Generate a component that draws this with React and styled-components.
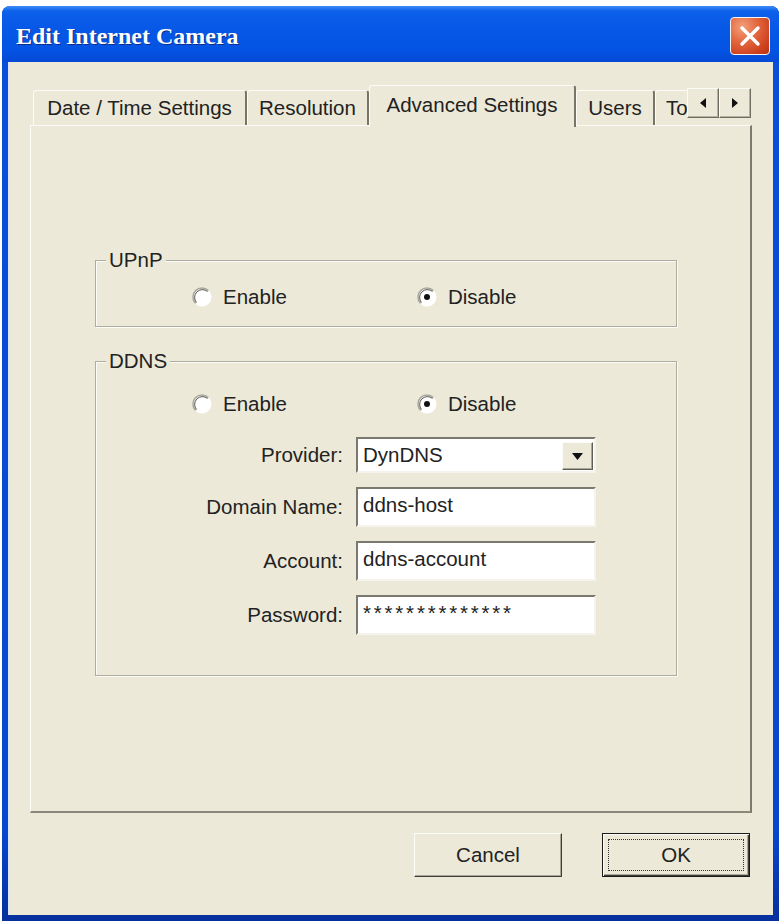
import React from "react";
import styled, { createGlobalStyle } from "styled-components";

const GlobalStyle = createGlobalStyle`
  html, body {
    margin: 0;
    padding: 0;
    background: #ffffff;
  }
  body {
    font-family: "Liberation Sans", Arial, sans-serif;
  }
`;

const Window = styled.div`
  margin: 6px 0 0 2px;
  width: 777px;
  height: 915px;
  display: flex;
  flex-direction: column;
  border-radius: 8px 8px 0 0;
  overflow: hidden;
  background: linear-gradient(180deg, #0a4fdc 0%, #0846d0 90%, #06309c 100%);
`;

const TitleBar = styled.div`
  height: 56px;
  flex: none;
  box-sizing: border-box;
  padding: 4px 9px 0 14px;
  display: flex;
  align-items: center;
  justify-content: space-between;
  background: linear-gradient(
    180deg,
    #3d8ef8 0%,
    #0d60ea 9%,
    #0758e6 40%,
    #0453e4 80%,
    #0649d4 100%
  );
`;

const Title = styled.div`
  font-family: "Liberation Serif", "Times New Roman", serif;
  font-weight: bold;
  font-size: 24px;
  color: #ffffff;
  text-shadow: 1px 1px 0 #0a2f8a;
`;

const CloseButton = styled.div`
  width: 40px;
  height: 38px;
  box-sizing: border-box;
  border: 1px solid #f4f4f4;
  border-radius: 4px;
  background: radial-gradient(
    circle at 30% 25%,
    #f3a07c 0%,
    #e2683f 40%,
    #cf4220 75%,
    #b8320f 100%
  );
  display: flex;
  align-items: center;
  justify-content: center;
`;

const Body = styled.div`
  flex: 1;
  margin: 0 6px 6px 6px;
  background: #ece9d8;
  box-sizing: border-box;
  padding: 23px 21px 0 22px;
  box-shadow: inset 2px 0 0 #d9e6fb;
  color: #222222;
  font-size: 20.5px;
`;

const TabRow = styled.div`
  height: 42px;
  margin-bottom: -2px;
  display: flex;
  align-items: flex-end;
  position: relative;
  z-index: 1;
`;

const TabList = styled.div`
  width: 657px;
  height: 42px;
  padding-left: 3px;
  box-sizing: border-box;
  display: flex;
  align-items: flex-end;
  overflow: hidden;
`;

const Tab = styled.div`
  flex: none;
  width: ${(p) => p.$w}px;
  height: ${(p) => (p.$active ? 42 : 35)}px;
  margin-bottom: ${(p) => (p.$active ? 0 : 2)}px;
  box-sizing: border-box;
  display: flex;
  align-items: ${(p) => (p.$active ? "flex-start" : "center")};
  padding-top: ${(p) => (p.$active ? 7 : 0)}px;
  padding-left: ${(p) => (p.$start ? 10 : 0)}px;
  justify-content: ${(p) => (p.$start ? "flex-start" : "center")};
  white-space: nowrap;
  background: #ece9d8;
  border-top: 1px solid #fbfbf7;
  border-left: 1px solid #fbfbf7;
  border-right: 2px solid #77756a;
  border-radius: 3px 3px 0 0;
`;

const ScrollArrows = styled.div`
  align-self: flex-start;
  margin-top: 3px;
  display: flex;
`;

const ArrowButton = styled.div`
  width: 32px;
  height: 30px;
  box-sizing: border-box;
  border: 1px solid;
  border-color: #fbfbf7 #6f6d62 #6f6d62 #fbfbf7;
  box-shadow: inset -1px -1px 0 #b3b1a4;
  display: flex;
  align-items: center;
  justify-content: center;
`;

const Panel = styled.div`
  width: 722px;
  height: 688px;
  box-sizing: border-box;
  border-top: 1px solid #fbfbf7;
  border-left: 1px solid #fbfbf7;
  border-right: 2px solid #7d7b70;
  border-bottom: 2px solid #8a887a;
  padding: 124px 0 0 64px;
`;

const Group = styled.fieldset`
  margin: 0 0 ${(p) => p.$gap || 0}px 0;
  width: 582px;
  box-sizing: border-box;
  border: 1px solid #aeac9f;
  box-shadow: inset 1px 1px 0 #fbfbf7, 1px 1px 0 #fbfbf7;
  padding: ${(p) => p.$pad};
  min-inline-size: 0;
`;

const Legend = styled.legend`
  margin-left: 10px;
  padding: 0 3px;
  font-size: 20.5px;
  line-height: 20px;
  background: #ece9d8;
`;

const RadioRow = styled.div`
  display: grid;
  grid-template-columns: 225px auto;
  padding-left: 96px;
`;

const RadioOption = styled.div`
  display: flex;
  align-items: center;
  gap: 11px;
  height: 22px;
`;

const Form = styled.div`
  display: grid;
  grid-template-columns: 247px 240px;
  column-gap: 13px;
  row-gap: 14px;
  align-items: center;
  margin-top: 22px;
`;

const Label = styled.div`
  text-align: right;
  white-space: nowrap;
`;

const Field = styled.div`
  height: 40px;
  box-sizing: border-box;
  background: #ffffff;
  border: 2px solid;
  border-color: #7b796e #f4f3ee #f4f3ee #7b796e;
  padding: 4px 6px 0 5px;
  line-height: 24px;
  white-space: nowrap;
  letter-spacing: ${(p) => p.$spacing || 0}px;
`;

const Select = styled.div`
  height: 36px;
  box-sizing: border-box;
  background: #ffffff;
  border: 2px solid;
  border-color: #7b796e #f4f3ee #f4f3ee #7b796e;
  padding: 0 1px 1px 5px;
  display: flex;
  align-items: center;
  justify-content: space-between;
`;

const DropButton = styled.div`
  width: 31px;
  height: 28px;
  align-self: flex-end;
  box-sizing: border-box;
  background: #ece9d8;
  border: 1px solid;
  border-color: #fbfbf7 #5f5d54 #5f5d54 #fbfbf7;
  box-shadow: inset -1px -1px 0 #a9a79a;
  display: flex;
  align-items: center;
  justify-content: center;
`;

const ButtonRow = styled.div`
  display: flex;
  justify-content: flex-end;
  gap: 40px;
  margin-top: 20px;
  padding-right: 2px;
`;

const Button = styled.div`
  width: 148px;
  height: 44px;
  box-sizing: border-box;
  display: flex;
  align-items: center;
  justify-content: center;
  background: #ece9d8;
  border: 1px solid;
  border-color: ${(p) =>
    p.$default ? "#1a1a1a" : "#fbfbf7 #3f3e38 #3f3e38 #fbfbf7"};
  box-shadow: ${(p) =>
    p.$default
      ? "inset 1px 1px 0 #fbfbf7, inset -1px -1px 0 #3f3e38, inset -2px -2px 0 #a9a79a"
      : "inset -1px -1px 0 #a9a79a"};
  outline: ${(p) => (p.$default ? "1px dotted #333" : "none")};
  outline-offset: -7px;
`;

const RadioIcon = ({ checked }) => (
  <svg width="20" height="20" viewBox="0 0 20 20">
    <circle cx="10" cy="10" r="9.5" fill="#ffffff" />
    <path
      d="M3.6 16.4 A9 9 0 0 1 16.4 3.6"
      fill="none"
      stroke="#a8a69a"
      strokeWidth="1.5"
    />
    <path
      d="M4.5 15.5 A7.8 7.8 0 0 1 15.5 4.5"
      fill="none"
      stroke="#55544e"
      strokeWidth="1"
    />
    {checked && <circle cx="10" cy="10" r="3" fill="#111" />}
  </svg>
);

const Radio = ({ label, checked }) => (
  <RadioOption>
    <RadioIcon checked={checked} />
    <span>{label}</span>
  </RadioOption>
);

const tabs = [
  { label: "Date / Time Settings", w: 214 },
  { label: "Resolution", w: 122 },
  { label: "Advanced Settings", w: 207, active: true },
  { label: "Users", w: 79 },
  { label: "Tools", w: 90, start: true },
];

const App = () => (
  <>
    <GlobalStyle />
    <Window>
      <TitleBar>
        <Title>Edit Internet Camera</Title>
        <CloseButton>
          <svg width="22" height="22" viewBox="0 0 22 22">
            <path
              d="M3 3 L19 19 M19 3 L3 19"
              stroke="#ffffff"
              strokeWidth="3.4"
              strokeLinecap="round"
            />
          </svg>
        </CloseButton>
      </TitleBar>
      <Body>
        <TabRow>
          <TabList>
            {tabs.map((t) => (
              <Tab key={t.label} $w={t.w} $active={t.active} $start={t.start}>
                {t.label}
              </Tab>
            ))}
          </TabList>
          <ScrollArrows>
            <ArrowButton>
              <svg width="6" height="10" viewBox="0 0 6 10">
                <polygon points="6,0 6,10 0,5" fill="#111" />
              </svg>
            </ArrowButton>
            <ArrowButton>
              <svg width="6" height="10" viewBox="0 0 6 10">
                <polygon points="0,0 0,10 6,5" fill="#111" />
              </svg>
            </ArrowButton>
          </ScrollArrows>
        </TabRow>
        <Panel>
          <Group $pad="16px 0 18px 0" $gap={24}>
            <Legend>UPnP</Legend>
            <RadioRow>
              <Radio label="Enable" />
              <Radio label="Disable" checked />
            </RadioRow>
          </Group>
          <Group $pad="22px 0 40px 0">
            <Legend>DDNS</Legend>
            <RadioRow>
              <Radio label="Enable" />
              <Radio label="Disable" checked />
            </RadioRow>
            <Form>
              <Label>Provider:</Label>
              <Select>
                <span>DynDNS</span>
                <DropButton>
                  <svg width="11" height="7" viewBox="0 0 11 7">
                    <polygon points="0,0 11,0 5.5,7" fill="#111" />
                  </svg>
                </DropButton>
              </Select>
              <Label>Domain Name:</Label>
              <Field>ddns-host</Field>
              <Label>Account:</Label>
              <Field>ddns-account</Field>
              <Label>Password:</Label>
              <Field $spacing={2.8}>**************</Field>
            </Form>
          </Group>
        </Panel>
        <ButtonRow>
          <Button>Cancel</Button>
          <Button $default>OK</Button>
        </ButtonRow>
      </Body>
    </Window>
  </>
);

export default App;
